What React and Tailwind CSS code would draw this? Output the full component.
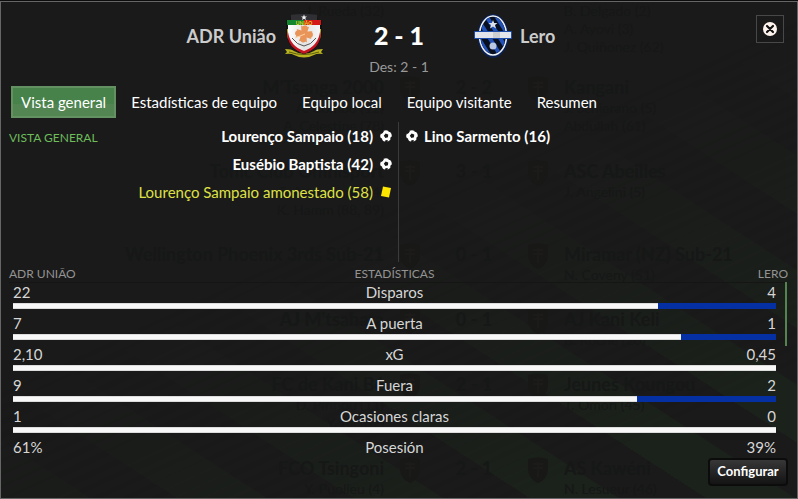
import React from 'react';

const tabs = ['Vista general', 'Estadísticas de equipo', 'Equipo local', 'Equipo visitante', 'Resumen'];

const stats = [
    { name: 'Disparos', home: '22', away: '4', share: 84.6 },
    { name: 'A puerta', home: '7', away: '1', share: 87.5 },
    { name: 'xG', home: '2,10', away: '0,45', share: 100 },
    { name: 'Fuera', home: '9', away: '2', share: 81.8 },
    { name: 'Ocasiones claras', home: '1', away: '0', share: 100 },
    { name: 'Posesión', home: '61%', away: '39%' },
];

const results = [
    { home: '', away: '', score: '', homeGoals: ['J. Rueda (32)'], awayGoals: ['B. Delgado (2)', 'A. Ayovi (3)', 'J. Quiñonez (62)'], height: 'h-[73px]' },
    { home: "M'Tsanga 2000", away: 'Kangani', score: '2 - 2', homeGoals: ['A. Combo (12)', 'A. Celestine (78)'], awayGoals: ['J. Schierano (5)', 'Abdullah (61)'], height: 'h-[84px]' },
    { home: 'Tonic Club Omnisport', away: 'ASC Abeilles', score: '3 - 1', homeGoals: ['S. Attoumani (24)', 'K. Hamm (88, 89)'], awayGoals: ['J. Angelini (5)'], height: 'h-[83px]' },
    { home: 'Wellington Phoenix 3rds Sub-21', away: 'Miramar (NZ) Sub-21', score: '0 - 1', homeGoals: [], awayGoals: ['N. Coveny (51)'], height: 'h-[65px]' },
    { home: "AJ M'tsahara", away: 'AJ Kani Keli', score: '0 - 1', homeGoals: [], awayGoals: ['B. Roche (20)'], height: 'h-[65px]' },
    { home: 'FC de Kani Bé', away: 'Jeunes Koungou', score: '2 - 1', homeGoals: ['D. Pirinou (11)', 'Y. Ali (62)'], awayGoals: ['T. Omori (45)'], height: 'h-[84px]' },
    { home: 'FCO Tsingoni', away: 'AS Kawéni', score: '2 - 1', homeGoals: ['Y. Puolieu (4)'], awayGoals: ['N. Lesueur (46)'], height: 'h-[42px]' },
];

function FaintCrest() {
    return (
        <svg className="w-7 h-7" viewBox="0 0 28 28">
            <path d="M4 3 Q14 0 24 3 L24 14 Q23 23 14 27 Q5 23 4 14Z" fill="#181817" />
            <path d="M9 8 H19 M9 12 H19 M14 6 V21" stroke="#1c1b1a" strokeWidth="2" />
        </svg>
    );
}

function Backdrop() {
    return (
        <div aria-hidden="true" className="absolute inset-0 overflow-hidden text-[#161717]">
            <div className="absolute inset-0 bg-[repeating-linear-gradient(33deg,#1b211b_0px,#1b211b_48px,#1a1a1a_49px,#1a1a1a_96px)] [mask-image:linear-gradient(155deg,transparent_45%,black_85%)]"></div>
            <div className="relative">
                {results.map((r, i) => (
                    <div key={i} className={`grid grid-cols-[calc(50%-15px)_180px_1fr] ${r.height}`}>
                        <div className="text-right">
                            {r.home && <p className="text-lg leading-6 font-bold whitespace-nowrap">{r.home}</p>}
                            {r.homeGoals.map((g) => <p key={g} className="text-sm leading-[18px]">{g}</p>)}
                        </div>
                        <div className="flex items-start justify-between px-3">
                            {r.score && (
                                <>
                                    <FaintCrest />
                                    <p className="text-lg leading-6 font-bold whitespace-nowrap">{r.score}</p>
                                    <FaintCrest />
                                </>
                            )}
                        </div>
                        <div>
                            {r.away && <p className="text-lg leading-6 font-bold whitespace-nowrap">{r.away}</p>}
                            {r.awayGoals.map((g) => <p key={g} className="text-sm leading-[18px]">{g}</p>)}
                        </div>
                    </div>
                ))}
            </div>
        </div>
    );
}

function HomeCrest() {
    return (
        <svg className="w-10 h-11" viewBox="0 0 40 44" aria-hidden="true">
            <defs>
                <clipPath id="shield">
                    <path d="M3 1 Q20 -1 37 1 L37 18 Q37 34 20 40 Q3 34 3 18Z" />
                </clipPath>
                <linearGradient id="silver" x1="0" x2="1">
                    <stop offset="0" stopColor="#ffffff" />
                    <stop offset="0.5" stopColor="#e3e3e3" />
                    <stop offset="1" stopColor="#f5f5f5" />
                </linearGradient>
            </defs>
            <path d="M1 35 Q8 35 10 37 Q20 43 30 37 Q32 35 39 35 L37 38 L39 40 Q33 39 30 41 Q20 46 10 41 Q7 39 1 40 L3 38Z" fill="#b8b31f" />
            <path d="M5 38 Q20 43 35 38" fill="none" stroke="#5f5c10" strokeWidth="1" />
            <path d="M8 0 Q20 -1 32 0 L34 6 L38 6 L38 18 Q37 34 20 40 Q3 34 2 18 L2 6 L6 6Z" fill="#111" />
            <g clipPath="url(#shield)">
                <rect x="7" width="26" height="6" fill="#303034" />
                <rect x="0" y="6" width="20" height="5" fill="#14852f" />
                <rect x="20" y="6" width="20" height="5" fill="#d41818" />
                <rect y="15" width="20" height="10" fill="#b8ad18" />
                <rect x="20" y="15" width="20" height="10" fill="#b8ad18" />
                <path d="M3 22 Q5 35 20 40 Q35 35 37 22 L35 11 L5 11Z" fill="#c51521" />
                <path d="M4 11 L36 11 L36 18 Q34 32 20 37 Q6 32 4 18Z" fill="url(#silver)" />
            </g>
            <text x="20" y="10.5" textAnchor="middle" fontSize="5" fontWeight="bold" fill="#e5d724">UNIÃO</text>
            <path d="M20 0.5 L20.8 2.5 L23 2.5 L21.3 3.8 L22 6 L20 4.7 L18 6 L18.7 3.8 L17 2.5 L19.2 2.5Z" fill="#f2f2f2" />
            <g fill="#e9955a" transform="rotate(8 20 20)">
                <circle cx="20" cy="14.5" r="3" />
                <circle cx="20" cy="25.5" r="3" />
                <circle cx="14" cy="20" r="3" />
                <circle cx="26" cy="20" r="3" />
                <path d="M16 12 L18 13 L22 13 L24 12 L23 17 L28 16 L27 18 L27 22 L28 24 L23 23 L24 28 L22 27 L18 27 L16 28 L17 23 L12 24 L13 22 L13 18 L12 16 L17 17Z" />
            </g>
            <path d="M11 24 L21 20" stroke="#ffd3a8" strokeWidth="1" />
            <path d="M8 24 Q13 31 20 32 Q27 31 32 24" fill="none" stroke="#555" strokeWidth="1" />
        </svg>
    );
}

function AwayCrest() {
    return (
        <svg className="w-[38px] h-11" viewBox="0 0 38 44" aria-hidden="true">
            <defs>
                <clipPath id="oval">
                    <ellipse cx="19" cy="21.5" rx="12.5" ry="18.5" />
                </clipPath>
            </defs>
            <ellipse cx="19" cy="22" rx="15.5" ry="22" fill="#0a2152" />
            <ellipse cx="19" cy="21.5" rx="13.5" ry="19.5" fill="#08101f" stroke="#eef2fa" strokeWidth="1.5" />
            <g clipPath="url(#oval)" stroke="#2252b8" strokeWidth="4">
                <path d="M-8 4 L18 46" />
                <path d="M2 2 L28 44" />
                <path d="M11 0 L38 43" />
                <path d="M21 0 L48 43" />
            </g>
            <path d="M19 6 L20.2 9 L23.5 9 L21 11 L22 14.5 L19 12.5 L16 14.5 L17 11 L14.5 9 L17.8 9Z" fill="#dce1ea" />
            <circle cx="19" cy="32" r="3.5" fill="#b8c7e3" />
            <rect x="0" y="17" width="38" height="8" rx="1" fill="#1c4ba8" />
            <rect x="1" y="18" width="36" height="6" fill="#e3e5ea" />
            <rect x="19" y="18" width="7" height="6" fill="#cccdd0" />
        </svg>
    );
}

function Ball() {
    return (
        <svg className="w-3 h-3 shrink-0" viewBox="0 0 12 12" aria-hidden="true">
            <circle cx="6" cy="6" r="5.8" fill="#fff" />
            <g fill="#1a1a1a">
                <path d="M5.6 3.6 L8.2 4.4 L8 7.2 L5.4 8 L3.8 5.8Z" />
                <path d="M0.4 1 L4 1 L2.8 3 L0.4 4.4Z" />
                <path d="M7.6 0 L11 1.6 L9 2Z" />
                <path d="M12 6.6 L10.6 7.2 L10.2 9.4 L12 9Z" />
                <path d="M0 7.6 L2 8.6 L2.8 11.4 L0.4 11Z" />
                <path d="M5.4 10.2 L7.8 10 L7.4 12 L5 12Z" />
            </g>
        </svg>
    );
}

function Card() {
    return (
        <svg className="w-3 h-3 shrink-0" viewBox="0 0 12 12" aria-hidden="true">
            <path d="M3 0.5 L11 2 L9 11.5 L1 10Z" fill="#ffe600" />
        </svg>
    );
}

export default function App() {
    return (
        <div className="min-h-screen bg-[#0c0c0c] pt-px font-['Lato',sans-serif] text-[#f2f2f2]">
            <main className="relative min-h-[calc(100vh-1px)] flex flex-col border border-[#666] bg-[#1a1a1a]">
                <Backdrop />

                <div className="relative flex-1 flex flex-col">
                    <header className="grid grid-cols-[1fr_150px_1fr] pt-3 h-[84px]">
                        <div className="flex items-center justify-end gap-2 h-11">
                            <h2 className="text-lg font-bold text-[#ccc]">ADR União</h2>
                            <HomeCrest />
                        </div>
                        <div className="text-center pt-px">
                            <p className="text-[25px] leading-10 font-black text-white">2 - 1</p>
                            <p className="text-[14px] leading-6 text-[#999]">Des: 2 - 1</p>
                        </div>
                        <div className="flex items-center gap-2 h-11">
                            <AwayCrest />
                            <h2 className="text-lg font-bold text-[#ccc]">Lero</h2>
                        </div>
                    </header>
                    <button aria-label="Cerrar" className="absolute top-[13px] right-[13px] w-7 h-7 flex items-center justify-center border border-[#484848]">
                        <svg className="w-[14px] h-[14px]" viewBox="0 0 14 14" aria-hidden="true">
                            <circle cx="7" cy="7" r="7" fill="#fff5ee" />
                            <path d="M4 4 L10 10 M10 4 L4 10" stroke="#141414" strokeWidth="2.2" strokeLinecap="round" />
                        </svg>
                    </button>

                    <nav className="flex gap-[5px] px-[10px] text-[15px] leading-5">
                        {tabs.map((tab, i) => (
                            <button
                                key={tab}
                                className={i === 0
                                    ? 'h-8 px-2 pb-px border-2 border-[#649162] bg-linear-to-b from-[#47824a] from-55% to-[#538553] to-60% text-white whitespace-nowrap'
                                    : 'h-8 px-[10px] pb-px text-white whitespace-nowrap'}
                            >
                                {tab}
                            </button>
                        ))}
                    </nav>

                    <section className="grid grid-cols-2 mt-1 h-[140px] text-[15px] leading-7">
                        <div className="flex justify-between border-r border-[#3b3b3b] pl-2 pr-[6px]">
                            <h3 className="text-[12px] text-[#6dbd5b] pt-[2px]">VISTA GENERAL</h3>
                            <ul className="font-bold text-white">
                                <li className="flex items-center justify-end gap-[7px]">Lourenço Sampaio (18) <Ball /></li>
                                <li className="flex items-center justify-end gap-[7px]">Eusébio Baptista (42) <Ball /></li>
                                <li className="flex items-center justify-end gap-[7px] font-normal text-[#dfe045]">Lourenço Sampaio amonestado (58) <Card /></li>
                            </ul>
                        </div>
                        <ul className="font-bold text-white pl-[7px]">
                            <li className="flex items-center gap-[6px]"><Ball /> Lino Sarmento (16)</li>
                        </ul>
                    </section>

                    <section className="relative pl-2 pr-[9px] pt-1">
                        <table className="w-full table-fixed text-[15px] leading-[18px] text-[#d6d6d6]">
                            <thead>
                                <tr className="text-[12px] leading-4 text-[#939393] border-b border-[#151515]">
                                    <th className="text-left font-normal">ADR UNIÃO</th>
                                    <th className="font-normal pr-2">ESTADÍSTICAS</th>
                                    <th className="text-right font-normal">LERO</th>
                                </tr>
                            </thead>
                            {stats.map((s) => (
                                <tbody key={s.name}>
                                    <tr>
                                        <td className="pl-1 pb-[2px]">{s.home}</td>
                                        <td className="text-center pr-2 pb-[2px]">{s.name}</td>
                                        <td className="text-right pr-3 pb-[2px]">{s.away}</td>
                                    </tr>
                                    {s.share && (
                                        <tr>
                                            <td colSpan={3} className="pl-1 pr-3 pb-[5px]">
                                                <div className="h-[6px] bg-[#0430a3]">
                                                    <div className="h-full bg-[#f8f8f8] border-y border-[#dcdcdc]" style={{ width: `${s.share}%` }}></div>
                                                </div>
                                            </td>
                                        </tr>
                                    )}
                                </tbody>
                            ))}
                        </table>
                        <div className="absolute top-5 right-[10px] w-[2px] h-16 bg-[#548551]"></div>
                    </section>

                    <footer className="flex justify-end pr-[9px] pb-3">
                        <button className="h-7 w-20 rounded-sm border-2 border-[#0c0c0c] bg-linear-to-b from-[#373737] to-[#141414] text-[13px] font-bold text-white">
                            Configurar
                        </button>
                    </footer>
                </div>
            </main>
        </div>
    );
}
